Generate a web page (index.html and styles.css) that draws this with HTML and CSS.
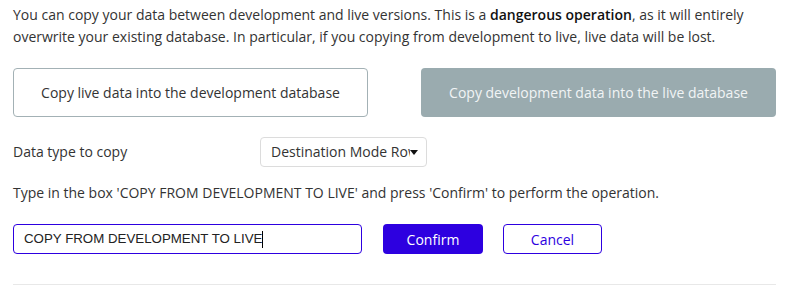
FILE: index.html
```html
<!DOCTYPE html>
<html lang="en">
<head>
    <meta charset="UTF-8">
    <meta name="viewport" content="width=device-width, initial-scale=1.0">
    <title>Copy data</title>
    <link rel="stylesheet" href="styles.css">
</head>
<body>
    <div class="container">
        <p class="intro">You can copy your data between development and live versions. This is a <strong>dangerous operation</strong>, as it will entirely overwrite your existing database. In particular, if you copying from development to live, live data will be lost.</p>

        <div class="copy-buttons">
            <button class="btn-outline-grey">Copy live data into the development database</button>
            <button class="btn-grey">Copy development data into the live database</button>
        </div>

        <div class="type-row">
            <label class="type-label">Data type to copy</label>
            <div class="dropdown">
                <span class="dropdown-text">Destination Mode Row</span>
                <span class="caret"></span>
            </div>
        </div>

        <p class="instructions">Type in the box 'COPY FROM DEVELOPMENT TO LIVE' and press 'Confirm' to perform the operation.</p>

        <div class="confirm-row">
            <div class="confirm-input">COPY FROM DEVELOPMENT TO LIVE<span class="cursor"></span></div>
            <button class="btn-primary">Confirm</button>
            <button class="btn-cancel">Cancel</button>
        </div>

        <div class="divider"></div>
    </div>
</body>
</html>
```

FILE: styles.css
```css
:root {
    --primary-color: #2d00e0;
    --text-color: #333;
    --grey-color: #9aabaf;
}

* {
    box-sizing: border-box;
    margin: 0;
    padding: 0;
}

body {
    font-family: 'Open Sans', 'Noto Sans', sans-serif;
    font-size: 14px;
    line-height: 22px;
    color: var(--text-color);
    background: #fff;
}

.container {
    width: 789px;
    padding: 4px 0 0 13px;
}

.intro {
    width: 770px;
}

.intro strong {
    font-weight: 600;
    color: #111;
}

button {
    font-family: inherit;
    font-size: 14px;
    border-radius: 4px;
    cursor: pointer;
}

.copy-buttons {
    display: flex;
    gap: 53px;
    margin-top: 20px;
}

.copy-buttons button {
    width: 355px;
    height: 49px;
}

.btn-outline-grey {
    background: #fff;
    border: 1px solid #a3b1b5;
    color: var(--text-color);
}

.btn-grey {
    background: var(--grey-color);
    border: none;
    color: #f1f4f5;
}

.type-row {
    display: flex;
    align-items: center;
    margin-top: 20px;
}

.type-label {
    width: 247px;
}

.dropdown {
    display: flex;
    align-items: center;
    width: 167px;
    height: 30px;
    padding: 0 8px 0 10px;
    border: 1px solid #dcdcdc;
    border-radius: 4px;
}

.dropdown-text {
    width: 140px;
    white-space: nowrap;
    overflow: hidden;
}

.caret {
    width: 0;
    height: 0;
    border-left: 4px solid transparent;
    border-right: 4px solid transparent;
    border-top: 5px solid #111;
}

.instructions {
    margin-top: 15px;
}

.confirm-row {
    display: flex;
    align-items: center;
    margin-top: 20px;
}

.confirm-input {
    display: flex;
    align-items: center;
    width: 349px;
    height: 30px;
    padding-left: 10px;
    border: 1px solid var(--primary-color);
    border-radius: 4px;
    font-family: 'Liberation Sans', Arial, sans-serif;
    font-size: 13.3px;
    color: #222;
}

.cursor {
    display: inline-block;
    width: 1px;
    height: 17px;
    background: #000;
}

.btn-primary {
    width: 100px;
    height: 30px;
    margin-left: 21px;
    background: var(--primary-color);
    border: none;
    color: #fff;
}

.btn-cancel {
    width: 99px;
    height: 30px;
    margin-left: 20px;
    background: #fff;
    border: 1px solid var(--primary-color);
    color: var(--primary-color);
}

.divider {
    width: 763px;
    margin-top: 30px;
    border-top: 1px solid #e8e8e8;
}
```
